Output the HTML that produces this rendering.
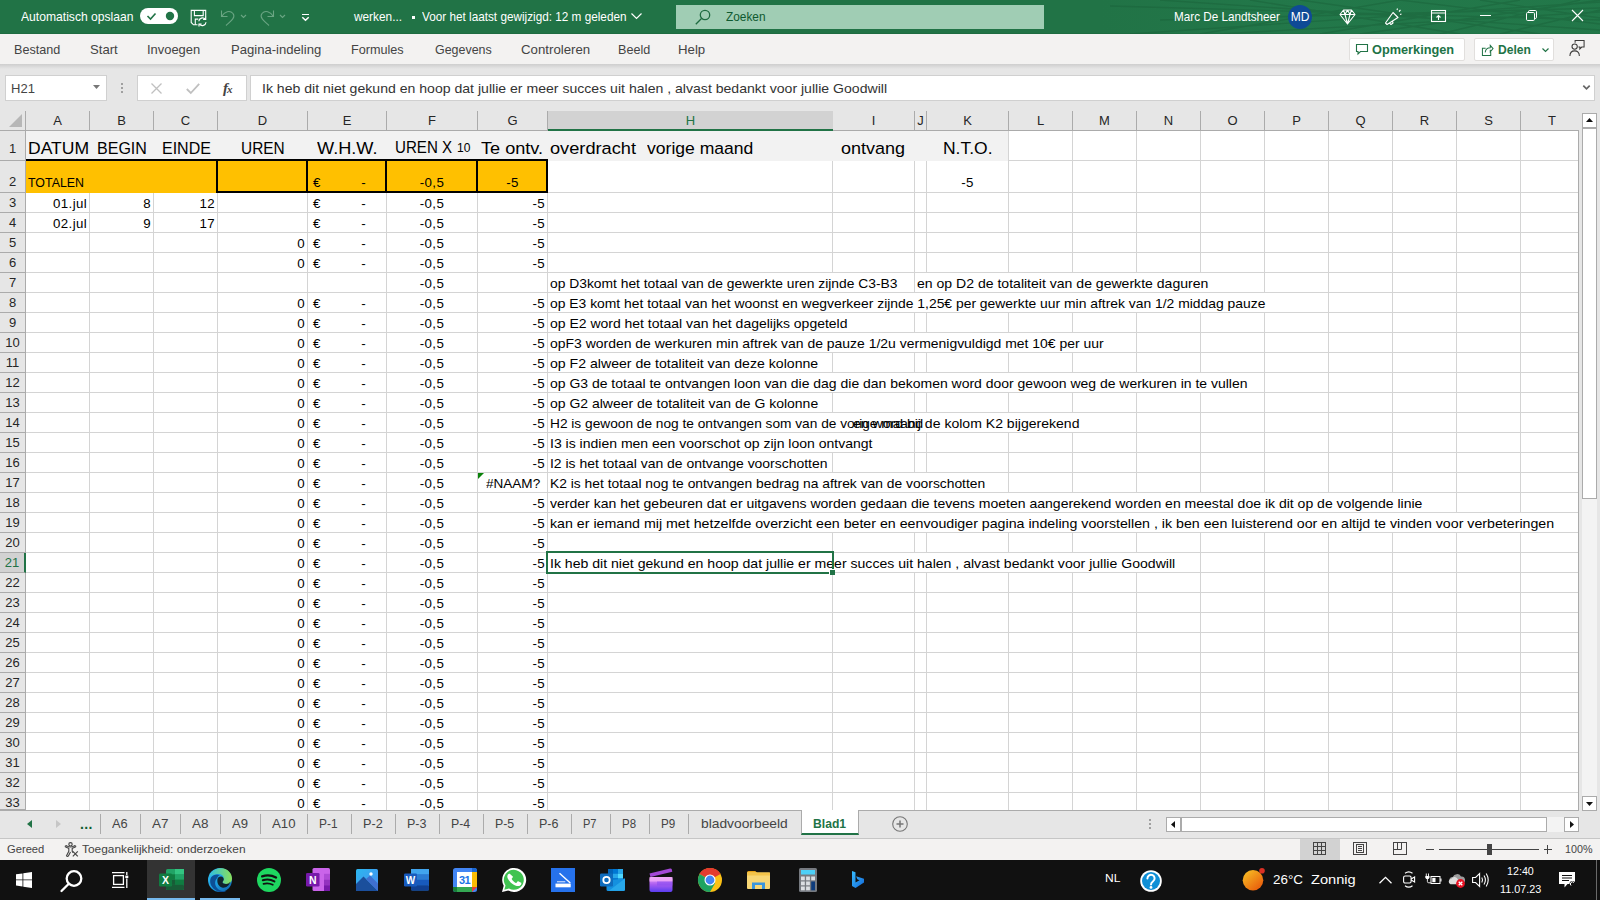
<!DOCTYPE html>
<html lang="nl"><head><meta charset="utf-8"><title>werken - Excel</title>
<style>
*{box-sizing:border-box;margin:0;padding:0}
html,body{width:1600px;height:900px;overflow:hidden;background:#e6e6e6;font-family:"Liberation Sans",sans-serif;color:#000}
.abs,#grid div,#chrome div,#chrome span{position:absolute}
#grid{position:absolute;left:0;top:0;width:1600px;height:810px;overflow:hidden}
#gridbg{position:absolute;left:26px;top:131px;width:1552px;height:679px;background:#fff}
.vl{top:131px;width:1px;height:679px;background:#d4d4d4}
.hl{left:26px;width:1552px;height:1px;background:#d4d4d4}
.c{white-space:nowrap;font-size:13.3px;letter-spacing:0.35px;color:#000}
.c.f{letter-spacing:0}
.ctr{transform:translateX(-50%)}
.ov{background:#fff}
.f{transform-origin:0 50%}
.h1{line-height:35px !important}
.h1 .sm{font-size:13px;position:static !important}
.r2{line-height:43px !important}
.tri{width:0;height:0;border-top:6px solid #0b820b;border-right:6px solid transparent}
.sel{border:2px solid #217346}
.selh{width:6px;height:6px;background:#217346;border-left:1px solid #fff;border-top:1px solid #fff}
#chrome{position:absolute;left:0;top:0;width:1600px;height:900px;pointer-events:none}
#chrome svg{position:absolute;overflow:visible}
.t{white-space:nowrap}
#titlebar{left:0;top:0;width:1600px;height:34px;background:#217346;border-bottom:1px solid #1e6c41}
#titlebar .t{color:#fff;font-size:12.2px;line-height:35px;top:0}
#tabs{left:0;top:34px;width:1600px;height:30px;background:#f3f2f1}
#tabs .t{color:#444;line-height:32px;top:0}
#tabshadow{left:0;top:64px;width:1600px;height:5px;background:linear-gradient(#cecece,#e6e6e6)}
.box{background:#fff;border:1px solid #d0d0d0}
.btn{background:#fff;border:1px solid #e1dfdd;border-radius:2px}
#tabs .btn .t{color:#217346;line-height:22px;top:0}
#fbar .t{font-size:14px;color:#222;line-height:26px;top:0}
.colh{top:111px;height:19px;text-align:center;font-size:13px;line-height:19px;color:#262626;border-right:1px solid #ababab}
.colh.selc{background:#d2d2d2;color:#217346;border-bottom:2px solid #217346;height:20px}
.rowh{left:0;width:25px;text-align:center;font-size:13px;color:#262626;border-bottom:1px solid #ababab}
.rowh.selr{background:#d2d2d2;color:#217346;border-right:2px solid #217346;width:26px}
#sheettabs .t{color:#444;line-height:26px;top:811px}
#sheettabs .sep{top:814px;width:1px;height:20px;background:#ababab}
#status{left:0;top:839px;width:1600px;height:21px;background:#f3f2f1}
#status .t{font-size:11.2px;color:#444;line-height:21px;top:0}
#taskbar{left:0;top:860px;width:1600px;height:40px;background:#111}
#taskbar .t{color:#fff}

</style></head><body>
<div id="gridbg"></div>
<div id="grid">
<div class="vl" style="left:89px"></div>
<div class="vl" style="left:153px"></div>
<div class="vl" style="left:217px"></div>
<div class="vl" style="left:307px"></div>
<div class="vl" style="left:386px"></div>
<div class="vl" style="left:477px"></div>
<div class="vl" style="left:547px"></div>
<div class="vl" style="left:832px"></div>
<div class="vl" style="left:914px"></div>
<div class="vl" style="left:926px"></div>
<div class="vl" style="left:1008px"></div>
<div class="vl" style="left:1072px"></div>
<div class="vl" style="left:1136px"></div>
<div class="vl" style="left:1200px"></div>
<div class="vl" style="left:1264px"></div>
<div class="vl" style="left:1328px"></div>
<div class="vl" style="left:1392px"></div>
<div class="vl" style="left:1456px"></div>
<div class="vl" style="left:1520px"></div>
<div class="vl" style="left:1578px"></div>
<div class="hl" style="top:160px"></div>
<div class="hl" style="top:192px"></div>
<div class="hl" style="top:212px"></div>
<div class="hl" style="top:232px"></div>
<div class="hl" style="top:252px"></div>
<div class="hl" style="top:272px"></div>
<div class="hl" style="top:292px"></div>
<div class="hl" style="top:312px"></div>
<div class="hl" style="top:332px"></div>
<div class="hl" style="top:352px"></div>
<div class="hl" style="top:372px"></div>
<div class="hl" style="top:392px"></div>
<div class="hl" style="top:412px"></div>
<div class="hl" style="top:432px"></div>
<div class="hl" style="top:452px"></div>
<div class="hl" style="top:472px"></div>
<div class="hl" style="top:492px"></div>
<div class="hl" style="top:512px"></div>
<div class="hl" style="top:532px"></div>
<div class="hl" style="top:552px"></div>
<div class="hl" style="top:572px"></div>
<div class="hl" style="top:592px"></div>
<div class="hl" style="top:612px"></div>
<div class="hl" style="top:632px"></div>
<div class="hl" style="top:652px"></div>
<div class="hl" style="top:672px"></div>
<div class="hl" style="top:692px"></div>
<div class="hl" style="top:712px"></div>
<div class="hl" style="top:732px"></div>
<div class="hl" style="top:752px"></div>
<div class="hl" style="top:772px"></div>
<div class="hl" style="top:792px"></div>
<div class="fill" style="left:26px;top:131px;width:982px;height:30px;background:#f2f2f2"></div>
<div class="fill" style="left:26px;top:161px;width:521px;height:32px;background:#ffc000"></div>
<div class="fill" style="left:26px;top:159px;width:522px;height:2px;background:#000"></div>
<div class="fill" style="left:217px;top:191px;width:331px;height:2px;background:#000"></div>
<div class="fill" style="left:216px;top:159px;width:2px;height:34px;background:#000"></div>
<div class="fill" style="left:306px;top:159px;width:2px;height:34px;background:#000"></div>
<div class="fill" style="left:385px;top:159px;width:2px;height:34px;background:#000"></div>
<div class="fill" style="left:476px;top:159px;width:2px;height:34px;background:#000"></div>
<div class="fill" style="left:546px;top:159px;width:2px;height:34px;background:#000"></div>
<div class="c f h1" style="left:27.5px;top:131px;height:29px;line-height:31px;font-size:16.8px;transform:scaleX(1.0458);">DATUM</div>
<div class="c f h1" style="left:96.5px;top:131px;height:29px;line-height:31px;font-size:16.8px;transform:scaleX(0.9553);">BEGIN</div>
<div class="c f h1" style="left:161.8px;top:131px;height:29px;line-height:31px;font-size:16.8px;transform:scaleX(0.9533);">EINDE</div>
<div class="c f h1" style="left:240.6px;top:131px;height:29px;line-height:31px;font-size:16.8px;transform:scaleX(0.9188);">UREN</div>
<div class="c f h1" style="left:317.1px;top:131px;height:29px;line-height:31px;font-size:16.8px;transform:scaleX(1.0816);">W.H.W.</div>
<div class="c f h1" style="left:481.4px;top:131px;height:29px;line-height:31px;font-size:16.8px;transform:scaleX(1.0794);">Te ontv.</div>
<div class="c f h1" style="left:550.4px;top:131px;height:29px;line-height:31px;font-size:16.8px;transform:scaleX(1.0845);">overdracht</div>
<div class="c f h1" style="left:647px;top:131px;height:29px;line-height:31px;font-size:16.8px;transform:scaleX(1.0463);">vorige maand</div>
<div class="c f h1" style="left:841.4px;top:131px;height:29px;line-height:31px;font-size:16.8px;transform:scaleX(1.0734);">ontvang</div>
<div class="c f h1" style="left:942.5px;top:131px;height:29px;line-height:31px;font-size:16.8px;transform:scaleX(1.0407);">N.T.O.</div>
<div class="c f h1" style="left:394.8px;top:131px;height:29px;line-height:31px;font-size:16.8px;transform:scaleX(0.9005);margin-top:-1px">UREN X</div>
<div class="c f h1" style="left:456.7px;top:131px;height:29px;line-height:31px;font-size:12.5px;transform:scaleX(0.9636);">10</div>
<div class="c f r2" style="left:27.5px;top:161px;height:31px;line-height:33px;font-size:13.3px;transform:scaleX(0.9316);">TOTALEN</div>
<div class="c r2" style="left:310px;top:161px;height:31px;line-height:33px;margin-left:3px">€</div>
<div class="c r2" style="right:1216px;top:161px;height:31px;line-height:33px;margin-right:18px">-</div>
<div class="c ctr r2" style="left:432.0px;top:161px;height:31px;line-height:33px;">-0,5</div>
<div class="c ctr r2" style="left:512.5px;top:161px;height:31px;line-height:33px;">-5</div>
<div class="c ctr r2" style="left:967.5px;top:161px;height:31px;line-height:33px;">-5</div>
<div class="c " style="right:1513px;top:193px;height:19px;line-height:21px;">01.jul</div>
<div class="c " style="right:1449px;top:193px;height:19px;line-height:21px;">8</div>
<div class="c " style="right:1385px;top:193px;height:19px;line-height:21px;">12</div>
<div class="c " style="right:1513px;top:213px;height:19px;line-height:21px;">02.jul</div>
<div class="c " style="right:1449px;top:213px;height:19px;line-height:21px;">9</div>
<div class="c " style="right:1385px;top:213px;height:19px;line-height:21px;">17</div>
<div class="c " style="left:310px;top:193px;height:19px;line-height:21px;margin-left:3px">€</div>
<div class="c " style="right:1216px;top:193px;height:19px;line-height:21px;margin-right:18px">-</div>
<div class="c ctr " style="left:432.0px;top:193px;height:19px;line-height:21px;">-0,5</div>
<div class="c " style="right:1055px;top:193px;height:19px;line-height:21px;">-5</div>
<div class="c " style="left:310px;top:213px;height:19px;line-height:21px;margin-left:3px">€</div>
<div class="c " style="right:1216px;top:213px;height:19px;line-height:21px;margin-right:18px">-</div>
<div class="c ctr " style="left:432.0px;top:213px;height:19px;line-height:21px;">-0,5</div>
<div class="c " style="right:1055px;top:213px;height:19px;line-height:21px;">-5</div>
<div class="c " style="right:1295px;top:233px;height:19px;line-height:21px;">0</div>
<div class="c " style="left:310px;top:233px;height:19px;line-height:21px;margin-left:3px">€</div>
<div class="c " style="right:1216px;top:233px;height:19px;line-height:21px;margin-right:18px">-</div>
<div class="c ctr " style="left:432.0px;top:233px;height:19px;line-height:21px;">-0,5</div>
<div class="c " style="right:1055px;top:233px;height:19px;line-height:21px;">-5</div>
<div class="c " style="right:1295px;top:253px;height:19px;line-height:21px;">0</div>
<div class="c " style="left:310px;top:253px;height:19px;line-height:21px;margin-left:3px">€</div>
<div class="c " style="right:1216px;top:253px;height:19px;line-height:21px;margin-right:18px">-</div>
<div class="c ctr " style="left:432.0px;top:253px;height:19px;line-height:21px;">-0,5</div>
<div class="c " style="right:1055px;top:253px;height:19px;line-height:21px;">-5</div>
<div class="c ctr " style="left:432.0px;top:273px;height:19px;line-height:21px;">-0,5</div>
<div class="c " style="right:1295px;top:293px;height:19px;line-height:21px;">0</div>
<div class="c " style="left:310px;top:293px;height:19px;line-height:21px;margin-left:3px">€</div>
<div class="c " style="right:1216px;top:293px;height:19px;line-height:21px;margin-right:18px">-</div>
<div class="c ctr " style="left:432.0px;top:293px;height:19px;line-height:21px;">-0,5</div>
<div class="c " style="right:1055px;top:293px;height:19px;line-height:21px;">-5</div>
<div class="c " style="right:1295px;top:313px;height:19px;line-height:21px;">0</div>
<div class="c " style="left:310px;top:313px;height:19px;line-height:21px;margin-left:3px">€</div>
<div class="c " style="right:1216px;top:313px;height:19px;line-height:21px;margin-right:18px">-</div>
<div class="c ctr " style="left:432.0px;top:313px;height:19px;line-height:21px;">-0,5</div>
<div class="c " style="right:1055px;top:313px;height:19px;line-height:21px;">-5</div>
<div class="c " style="right:1295px;top:333px;height:19px;line-height:21px;">0</div>
<div class="c " style="left:310px;top:333px;height:19px;line-height:21px;margin-left:3px">€</div>
<div class="c " style="right:1216px;top:333px;height:19px;line-height:21px;margin-right:18px">-</div>
<div class="c ctr " style="left:432.0px;top:333px;height:19px;line-height:21px;">-0,5</div>
<div class="c " style="right:1055px;top:333px;height:19px;line-height:21px;">-5</div>
<div class="c " style="right:1295px;top:353px;height:19px;line-height:21px;">0</div>
<div class="c " style="left:310px;top:353px;height:19px;line-height:21px;margin-left:3px">€</div>
<div class="c " style="right:1216px;top:353px;height:19px;line-height:21px;margin-right:18px">-</div>
<div class="c ctr " style="left:432.0px;top:353px;height:19px;line-height:21px;">-0,5</div>
<div class="c " style="right:1055px;top:353px;height:19px;line-height:21px;">-5</div>
<div class="c " style="right:1295px;top:373px;height:19px;line-height:21px;">0</div>
<div class="c " style="left:310px;top:373px;height:19px;line-height:21px;margin-left:3px">€</div>
<div class="c " style="right:1216px;top:373px;height:19px;line-height:21px;margin-right:18px">-</div>
<div class="c ctr " style="left:432.0px;top:373px;height:19px;line-height:21px;">-0,5</div>
<div class="c " style="right:1055px;top:373px;height:19px;line-height:21px;">-5</div>
<div class="c " style="right:1295px;top:393px;height:19px;line-height:21px;">0</div>
<div class="c " style="left:310px;top:393px;height:19px;line-height:21px;margin-left:3px">€</div>
<div class="c " style="right:1216px;top:393px;height:19px;line-height:21px;margin-right:18px">-</div>
<div class="c ctr " style="left:432.0px;top:393px;height:19px;line-height:21px;">-0,5</div>
<div class="c " style="right:1055px;top:393px;height:19px;line-height:21px;">-5</div>
<div class="c " style="right:1295px;top:413px;height:19px;line-height:21px;">0</div>
<div class="c " style="left:310px;top:413px;height:19px;line-height:21px;margin-left:3px">€</div>
<div class="c " style="right:1216px;top:413px;height:19px;line-height:21px;margin-right:18px">-</div>
<div class="c ctr " style="left:432.0px;top:413px;height:19px;line-height:21px;">-0,5</div>
<div class="c " style="right:1055px;top:413px;height:19px;line-height:21px;">-5</div>
<div class="c " style="right:1295px;top:433px;height:19px;line-height:21px;">0</div>
<div class="c " style="left:310px;top:433px;height:19px;line-height:21px;margin-left:3px">€</div>
<div class="c " style="right:1216px;top:433px;height:19px;line-height:21px;margin-right:18px">-</div>
<div class="c ctr " style="left:432.0px;top:433px;height:19px;line-height:21px;">-0,5</div>
<div class="c " style="right:1055px;top:433px;height:19px;line-height:21px;">-5</div>
<div class="c " style="right:1295px;top:453px;height:19px;line-height:21px;">0</div>
<div class="c " style="left:310px;top:453px;height:19px;line-height:21px;margin-left:3px">€</div>
<div class="c " style="right:1216px;top:453px;height:19px;line-height:21px;margin-right:18px">-</div>
<div class="c ctr " style="left:432.0px;top:453px;height:19px;line-height:21px;">-0,5</div>
<div class="c " style="right:1055px;top:453px;height:19px;line-height:21px;">-5</div>
<div class="c " style="right:1295px;top:473px;height:19px;line-height:21px;">0</div>
<div class="c " style="left:310px;top:473px;height:19px;line-height:21px;margin-left:3px">€</div>
<div class="c " style="right:1216px;top:473px;height:19px;line-height:21px;margin-right:18px">-</div>
<div class="c ctr " style="left:432.0px;top:473px;height:19px;line-height:21px;">-0,5</div>
<div class="c f " style="left:485.8px;top:473px;height:19px;line-height:21px;font-size:13.3px;transform:scaleX(1.0184);">#NAAM?</div>
<div class="c " style="right:1295px;top:493px;height:19px;line-height:21px;">0</div>
<div class="c " style="left:310px;top:493px;height:19px;line-height:21px;margin-left:3px">€</div>
<div class="c " style="right:1216px;top:493px;height:19px;line-height:21px;margin-right:18px">-</div>
<div class="c ctr " style="left:432.0px;top:493px;height:19px;line-height:21px;">-0,5</div>
<div class="c " style="right:1055px;top:493px;height:19px;line-height:21px;">-5</div>
<div class="c " style="right:1295px;top:513px;height:19px;line-height:21px;">0</div>
<div class="c " style="left:310px;top:513px;height:19px;line-height:21px;margin-left:3px">€</div>
<div class="c " style="right:1216px;top:513px;height:19px;line-height:21px;margin-right:18px">-</div>
<div class="c ctr " style="left:432.0px;top:513px;height:19px;line-height:21px;">-0,5</div>
<div class="c " style="right:1055px;top:513px;height:19px;line-height:21px;">-5</div>
<div class="c " style="right:1295px;top:533px;height:19px;line-height:21px;">0</div>
<div class="c " style="left:310px;top:533px;height:19px;line-height:21px;margin-left:3px">€</div>
<div class="c " style="right:1216px;top:533px;height:19px;line-height:21px;margin-right:18px">-</div>
<div class="c ctr " style="left:432.0px;top:533px;height:19px;line-height:21px;">-0,5</div>
<div class="c " style="right:1055px;top:533px;height:19px;line-height:21px;">-5</div>
<div class="c " style="right:1295px;top:553px;height:19px;line-height:21px;">0</div>
<div class="c " style="left:310px;top:553px;height:19px;line-height:21px;margin-left:3px">€</div>
<div class="c " style="right:1216px;top:553px;height:19px;line-height:21px;margin-right:18px">-</div>
<div class="c ctr " style="left:432.0px;top:553px;height:19px;line-height:21px;">-0,5</div>
<div class="c " style="right:1055px;top:553px;height:19px;line-height:21px;">-5</div>
<div class="c " style="right:1295px;top:573px;height:19px;line-height:21px;">0</div>
<div class="c " style="left:310px;top:573px;height:19px;line-height:21px;margin-left:3px">€</div>
<div class="c " style="right:1216px;top:573px;height:19px;line-height:21px;margin-right:18px">-</div>
<div class="c ctr " style="left:432.0px;top:573px;height:19px;line-height:21px;">-0,5</div>
<div class="c " style="right:1055px;top:573px;height:19px;line-height:21px;">-5</div>
<div class="c " style="right:1295px;top:593px;height:19px;line-height:21px;">0</div>
<div class="c " style="left:310px;top:593px;height:19px;line-height:21px;margin-left:3px">€</div>
<div class="c " style="right:1216px;top:593px;height:19px;line-height:21px;margin-right:18px">-</div>
<div class="c ctr " style="left:432.0px;top:593px;height:19px;line-height:21px;">-0,5</div>
<div class="c " style="right:1055px;top:593px;height:19px;line-height:21px;">-5</div>
<div class="c " style="right:1295px;top:613px;height:19px;line-height:21px;">0</div>
<div class="c " style="left:310px;top:613px;height:19px;line-height:21px;margin-left:3px">€</div>
<div class="c " style="right:1216px;top:613px;height:19px;line-height:21px;margin-right:18px">-</div>
<div class="c ctr " style="left:432.0px;top:613px;height:19px;line-height:21px;">-0,5</div>
<div class="c " style="right:1055px;top:613px;height:19px;line-height:21px;">-5</div>
<div class="c " style="right:1295px;top:633px;height:19px;line-height:21px;">0</div>
<div class="c " style="left:310px;top:633px;height:19px;line-height:21px;margin-left:3px">€</div>
<div class="c " style="right:1216px;top:633px;height:19px;line-height:21px;margin-right:18px">-</div>
<div class="c ctr " style="left:432.0px;top:633px;height:19px;line-height:21px;">-0,5</div>
<div class="c " style="right:1055px;top:633px;height:19px;line-height:21px;">-5</div>
<div class="c " style="right:1295px;top:653px;height:19px;line-height:21px;">0</div>
<div class="c " style="left:310px;top:653px;height:19px;line-height:21px;margin-left:3px">€</div>
<div class="c " style="right:1216px;top:653px;height:19px;line-height:21px;margin-right:18px">-</div>
<div class="c ctr " style="left:432.0px;top:653px;height:19px;line-height:21px;">-0,5</div>
<div class="c " style="right:1055px;top:653px;height:19px;line-height:21px;">-5</div>
<div class="c " style="right:1295px;top:673px;height:19px;line-height:21px;">0</div>
<div class="c " style="left:310px;top:673px;height:19px;line-height:21px;margin-left:3px">€</div>
<div class="c " style="right:1216px;top:673px;height:19px;line-height:21px;margin-right:18px">-</div>
<div class="c ctr " style="left:432.0px;top:673px;height:19px;line-height:21px;">-0,5</div>
<div class="c " style="right:1055px;top:673px;height:19px;line-height:21px;">-5</div>
<div class="c " style="right:1295px;top:693px;height:19px;line-height:21px;">0</div>
<div class="c " style="left:310px;top:693px;height:19px;line-height:21px;margin-left:3px">€</div>
<div class="c " style="right:1216px;top:693px;height:19px;line-height:21px;margin-right:18px">-</div>
<div class="c ctr " style="left:432.0px;top:693px;height:19px;line-height:21px;">-0,5</div>
<div class="c " style="right:1055px;top:693px;height:19px;line-height:21px;">-5</div>
<div class="c " style="right:1295px;top:713px;height:19px;line-height:21px;">0</div>
<div class="c " style="left:310px;top:713px;height:19px;line-height:21px;margin-left:3px">€</div>
<div class="c " style="right:1216px;top:713px;height:19px;line-height:21px;margin-right:18px">-</div>
<div class="c ctr " style="left:432.0px;top:713px;height:19px;line-height:21px;">-0,5</div>
<div class="c " style="right:1055px;top:713px;height:19px;line-height:21px;">-5</div>
<div class="c " style="right:1295px;top:733px;height:19px;line-height:21px;">0</div>
<div class="c " style="left:310px;top:733px;height:19px;line-height:21px;margin-left:3px">€</div>
<div class="c " style="right:1216px;top:733px;height:19px;line-height:21px;margin-right:18px">-</div>
<div class="c ctr " style="left:432.0px;top:733px;height:19px;line-height:21px;">-0,5</div>
<div class="c " style="right:1055px;top:733px;height:19px;line-height:21px;">-5</div>
<div class="c " style="right:1295px;top:753px;height:19px;line-height:21px;">0</div>
<div class="c " style="left:310px;top:753px;height:19px;line-height:21px;margin-left:3px">€</div>
<div class="c " style="right:1216px;top:753px;height:19px;line-height:21px;margin-right:18px">-</div>
<div class="c ctr " style="left:432.0px;top:753px;height:19px;line-height:21px;">-0,5</div>
<div class="c " style="right:1055px;top:753px;height:19px;line-height:21px;">-5</div>
<div class="c " style="right:1295px;top:773px;height:19px;line-height:21px;">0</div>
<div class="c " style="left:310px;top:773px;height:19px;line-height:21px;margin-left:3px">€</div>
<div class="c " style="right:1216px;top:773px;height:19px;line-height:21px;margin-right:18px">-</div>
<div class="c ctr " style="left:432.0px;top:773px;height:19px;line-height:21px;">-0,5</div>
<div class="c " style="right:1055px;top:773px;height:19px;line-height:21px;">-5</div>
<div class="c " style="right:1295px;top:793px;height:19px;line-height:21px;">0</div>
<div class="c " style="left:310px;top:793px;height:19px;line-height:21px;margin-left:3px">€</div>
<div class="c " style="right:1216px;top:793px;height:19px;line-height:21px;margin-right:18px">-</div>
<div class="c ctr " style="left:432.0px;top:793px;height:19px;line-height:21px;">-0,5</div>
<div class="c " style="right:1055px;top:793px;height:19px;line-height:21px;">-5</div>
<div class="fill" style="left:914px;top:413px;width:222px;height:19px;background:#fff"></div>
<div class="c f ov" style="left:550px;top:273px;height:19px;line-height:21px;font-size:13.3px;transform:scaleX(1.0400);">op D3komt het totaal van de gewerkte uren zijnde C3-B3</div>
<div class="c f ov" style="left:550px;top:293px;height:19px;line-height:21px;font-size:13.3px;transform:scaleX(1.0441);">op E3 komt het totaal van het woonst en wegverkeer zijnde 1,25€ per gewerkte uur min aftrek van 1/2 middag pauze</div>
<div class="c f ov" style="left:550px;top:313px;height:19px;line-height:21px;font-size:13.3px;transform:scaleX(1.0506);">op E2 word het totaal van het dagelijks opgeteld</div>
<div class="c f ov" style="left:550px;top:333px;height:19px;line-height:21px;font-size:13.3px;transform:scaleX(1.0492);">opF3 worden de werkuren min aftrek van de pauze 1/2u vermenigvuldigd met 10€ per uur</div>
<div class="c f ov" style="left:550px;top:353px;height:19px;line-height:21px;font-size:13.3px;transform:scaleX(1.0609);">op F2 alweer de totaliteit van deze kolonne</div>
<div class="c f ov" style="left:550px;top:373px;height:19px;line-height:21px;font-size:13.3px;transform:scaleX(1.0507);">op G3 de totaal te ontvangen loon van die dag die dan bekomen word door gewoon weg de werkuren in te vullen</div>
<div class="c f ov" style="left:550px;top:393px;height:19px;line-height:21px;font-size:13.3px;transform:scaleX(1.0516);">op G2 alweer de totaliteit van de G kolonne</div>
<div class="c f ov" style="left:550px;top:413px;height:19px;line-height:21px;font-size:13.3px;transform:scaleX(1.0303);">H2 is gewoon de nog te ontvangen som van de vorige maand</div>
<div class="c f ov" style="left:550px;top:433px;height:19px;line-height:21px;font-size:13.3px;transform:scaleX(1.0537);">I3 is indien men een voorschot op zijn loon ontvangt</div>
<div class="c f ov" style="left:550px;top:453px;height:19px;line-height:21px;font-size:13.3px;transform:scaleX(1.0484);">I2 is het totaal van de ontvange voorschotten</div>
<div class="c f ov" style="left:550px;top:473px;height:19px;line-height:21px;font-size:13.3px;transform:scaleX(1.0401);">K2 is het totaal nog te ontvangen bedrag na aftrek van de voorschotten</div>
<div class="c f ov" style="left:550px;top:493px;height:19px;line-height:21px;font-size:13.3px;transform:scaleX(1.0546);">verder kan het gebeuren dat er uitgavens worden gedaan die tevens moeten aangerekend worden en meestal doe ik dit op de volgende linie</div>
<div class="c f ov" style="left:550px;top:513px;height:19px;line-height:21px;font-size:13.3px;transform:scaleX(1.0680);">kan er iemand mij met hetzelfde overzicht een beter en eenvoudiger pagina indeling voorstellen , ik ben een luisterend oor en altijd te vinden voor verbeteringen</div>
<div class="c f ov" style="left:550px;top:553px;height:19px;line-height:21px;font-size:13.3px;transform:scaleX(1.0586);">Ik heb dit niet gekund en hoop dat jullie er meer succes uit halen , alvast bedankt voor jullie Goodwill</div>
<div class="c f ov" style="left:917px;top:273px;height:19px;line-height:21px;font-size:13.3px;transform:scaleX(1.0565);">en op D2 de totaliteit van de gewerkte daguren</div>
<div class="c f " style="left:853.3px;top:413px;height:19px;line-height:21px;font-size:13.3px;transform:scaleX(1.0566);">en word bij de kolom K2 bijgerekend</div>
<div class="tri" style="left:478px;top:473px"></div>
<div class="sel" style="left:546px;top:551px;width:288px;height:23px"></div>
<div class="selh" style="left:829px;top:569px"></div>
</div>
<div id="chrome">
<div id="titlebar">
<svg width="500" height="34" style="left:1100px;top:0" viewBox="0 0 500 34"><defs><linearGradient id="tg" x1="0" y1="0" x2="1" y2="0"><stop offset="0" stop-color="#258050" stop-opacity="0"/><stop offset=".4" stop-color="#258050" stop-opacity=".35"/><stop offset="1" stop-color="#258050" stop-opacity=".35"/></linearGradient></defs><rect width="500" height="34" fill="url(#tg)"/><g fill="none" stroke="#1a6239" stroke-width="1.300" opacity=".5"><path d="M30 34L500 2M60 0L500 30M120 34L500 12M10 6L500 20M200 0L440 34M260 34L500 0M300 0L500 24M150 0L360 34M340 34L480 0M380 0L500 18M220 34L420 0M60 20L500 8M400 34L500 10M100 34L300 0"/></g></svg>
<span class="t f" style="left:20.5px;font-size:12.2px;transform:scaleX(0.9943);">Automatisch opslaan</span>
<div style="left:140px;top:8px;width:38px;height:16px;border-radius:8px;background:#fff"></div>
<svg style="left:140px;top:8px" width="38" height="16" viewBox="0 0 38 16"><path d="M7.5 8l3 3 5-5.5" fill="none" stroke="#217346" stroke-width="1.6"/><circle cx="30" cy="8" r="4.2" fill="#217346"/></svg>
<svg style="left:190px;top:9px" width="18" height="18" viewBox="0 0 18 18" fill="none" stroke="#fff" stroke-width="1.100"><path d="M7.500 15.800H3.500l-2.300-2.300V1.400h14.500v6.500"/><path d="M4.400 1.400v5.200h8.800V1.400"/><path d="M5.300 15.800v-5.700h3"/><g stroke-width="1.200"><path d="M8.800 12.200a3.700 3.700 0 0 1 6.500-2M16 13.200a3.700 3.700 0 0 1-6.500 2"/><path d="M15.700 7.800v2.600h-2.600M9 17.600v-2.600h2.600"/></g></svg>
<svg style="left:220px;top:9px" width="70" height="18" viewBox="0 0 70 18" fill="none" stroke="#6aa583" stroke-width="1.1"><path d="M1.5 1.5v6h6M1.8 7.3C4.5 2.5 10 1 13 4.5c3 3.800-2 7.500-7 12"/><path d="M21 6l2.500 2.500 2.500-2.500"/><path d="M53.500 1.500v6h-6M53.200 7.300C50.500 2.500 45 1 42 4.500c-3 3.800 2 7.500 7 12"/><path d="M60 6l2.500 2.500 2.500-2.500"/></svg>
<svg style="left:301px;top:13px" width="9" height="9" viewBox="0 0 9 9" fill="none" stroke="#fff" stroke-width="1"><path d="M1 1.500h7"/><path d="M1.300 4.300l3.200 3 3.200-3" stroke-width="1.500"/></svg>
<span class="t f" style="left:353.5px;font-size:12.2px;transform:scaleX(0.9706);">werken...</span>
<div style="left:412px;top:16px;width:3px;height:3px;background:#fff"></div>
<span class="t f" style="left:422px;font-size:12.2px;transform:scaleX(0.9643);">Voor het laatst gewijzigd: 12 m geleden</span>
<svg style="left:631px;top:13px" width="11" height="7" viewBox="0 0 11 7" fill="none" stroke="#fff" stroke-width="1.2"><path d="M0.500 0.500l5 5 5-5"/></svg>
<div style="left:676px;top:5px;width:368px;height:24px;background:#a0cdb4"></div>
<svg style="left:695px;top:9px" width="16" height="16" viewBox="0 0 16 16" fill="none" stroke="#1e6b40" stroke-width="1.3"><circle cx="10" cy="6" r="4.700"/><path d="M6.500 9.500L0.800 15.200"/></svg>
<span class="t f" style="left:725.5px;font-size:12.2px;transform:scaleX(0.9716);color:#0f5a30">Zoeken</span>
<span class="t f" style="left:1173.5px;font-size:12.2px;transform:scaleX(0.9600);">Marc De Landtsheer</span>
<div style="left:1288px;top:5px;width:24px;height:24px;border-radius:12px;background:#0f4a96;color:#fff;font-size:12px;line-height:24px;text-align:center">MD</div>
<svg style="left:1339px;top:9px" width="17" height="16" viewBox="0 0 17 16" fill="none" stroke="#fff" stroke-width="1.1" stroke-linejoin="round"><path d="M4.500 1h8l3.500 4.500-7.500 9.500L1 5.500zM1 5.500h15M6 5.500l2.500 9.500 2.500-9.500M4.500 1l1.500 4.500 2.500-4.500 2.500 4.500 1.500-4.500"/></svg>
<svg style="left:1384px;top:8px" width="18" height="18" viewBox="0 0 18 18" fill="none" stroke="#fff" stroke-width="1.1" stroke-linejoin="round"><path d="M9 4.500l5 5L3 16.500 1.500 15zM5.500 15l1.500 1.500 2-1.500-.5-2M13 2l.5-1.500M15 3.500l1.500-1.500M16 6.500l1.500-.5"/></svg>
<svg style="left:1431px;top:10px" width="15" height="12" viewBox="0 0 15 12" fill="none" stroke="#fff" stroke-width="1.1"><rect x=".5" y=".5" width="14" height="11"/><path d="M.5 3h14M7.500 10V5.500M5.500 7.500l2-2 2 2"/></svg>
<div style="left:1480px;top:15px;width:11px;height:1px;background:#fff"></div>
<svg style="left:1526px;top:10px" width="11" height="11" viewBox="0 0 11 11" fill="none" stroke="#fff" stroke-width="1"><rect x=".5" y="2.500" width="8" height="8" rx="1.200"/><path d="M2.500 2.300V1.700Q2.500.5 3.700.5H9.300Q10.500.5 10.500 1.700V7.300Q10.500 8.500 9.300 8.500H8.700"/></svg>
<svg style="left:1572px;top:10px" width="11" height="11" viewBox="0 0 11 11" fill="none" stroke="#fff" stroke-width="1.1"><path d="M0 0l11 11M11 0L0 11"/></svg>
</div>
<div id="tabs">
<span class="t f" style="left:14px;font-size:13px;transform:scaleX(0.9685);">Bestand</span>
<span class="t f" style="left:90px;font-size:13px;transform:scaleX(1.0084);">Start</span>
<span class="t f" style="left:147px;font-size:13px;transform:scaleX(0.9944);">Invoegen</span>
<span class="t f" style="left:231px;font-size:13px;transform:scaleX(1.0064);">Pagina-indeling</span>
<span class="t f" style="left:351px;font-size:13px;transform:scaleX(0.9725);">Formules</span>
<span class="t f" style="left:434.5px;font-size:13px;transform:scaleX(0.9567);">Gegevens</span>
<span class="t f" style="left:520.5px;font-size:13px;transform:scaleX(1.0186);">Controleren</span>
<span class="t f" style="left:618px;font-size:13px;transform:scaleX(0.9684);">Beeld</span>
<span class="t f" style="left:678px;font-size:13px;transform:scaleX(1.0168);">Help</span>
<div class="btn" style="left:1349px;top:4px;width:116px;height:23px"><svg style="left:6px;top:5px" width="12" height="11" viewBox="0 0 12 11" fill="none" stroke="#217346" stroke-width="1.1"><path d="M.5.5h11v7h-7l-2.500 2.500v-2.500h-1.500z"/></svg><span class="t f" style="left:21.8px;font-size:13px;font-weight:bold;transform:scaleX(0.9798);">Opmerkingen</span></div>
<div class="btn" style="left:1474px;top:4px;width:80px;height:23px"><svg style="left:6px;top:5px" width="13" height="12" viewBox="0 0 13 13" fill="none" stroke="#217346" stroke-width="1.1"><path d="M4.500 4.500h-3.500v8h9v-3.500M4 9c.5-3.500 2.500-5 5.500-5V1.500l3 3.500-3 3.500V6.200"/></svg><span class="t f" style="left:22.8px;font-size:13px;font-weight:bold;transform:scaleX(0.9264);">Delen</span><svg style="left:67px;top:9px" width="7" height="5" viewBox="0 0 7 5" fill="none" stroke="#217346" stroke-width="1.2"><path d="M.5.500l3 3 3-3"/></svg></div>
<svg style="left:1568px;top:6px" width="18" height="17" viewBox="0 0 18 18" fill="none" stroke="#3b3a39" stroke-width="1.1"><circle cx="6.500" cy="7" r="2.800"/><path d="M1.500 17c0-4 2-5.500 5-5.500s5 1.500 5 5.500M7 3V.5h9.500v7h-2.500l-2 2v-2h-1.500"/></svg>
</div><div id="tabshadow"></div>
<div id="fbar">
<div class="box" style="left:5px;top:75px;width:102px;height:26px"><span class="t f" style="left:5.3px;font-size:13.3px;transform:scaleX(0.9793);color:#444">H21</span><svg style="left:87px;top:9px" width="7" height="4" viewBox="0 0 7 4"><path d="M0 0h7l-3.500 4z" fill="#777"/></svg></div>
<svg style="left:121px;top:83px" width="2" height="10" viewBox="0 0 2 10" fill="#a0a0a0"><rect width="2" height="2"/><rect y="4" width="2" height="2"/><rect y="8" width="2" height="2"/></svg>
<div class="box" style="left:137px;top:75px;width:110px;height:26px"><svg style="left:13px;top:7px" width="11" height="11" viewBox="0 0 11 11" fill="none" stroke="#c0c0c0" stroke-width="1.300"><path d="M.5.500l10 10M10.500.500l-10 10"/></svg><svg style="left:48px;top:7px" width="14" height="11" viewBox="0 0 14 11" fill="none" stroke="#c0c0c0" stroke-width="1.800"><path d="M.8 6l4 4L13.200.800"/></svg><span class="t" style="left:85px;font-family:'Liberation Serif',serif;font-style:italic;font-size:15px;color:#444;font-weight:bold;letter-spacing:-1px;margin-top:-1px">f<span style="position:static;font-size:11px">x</span></span></div>
<div class="box" style="left:250px;top:75px;width:1345px;height:26px"><span class="t f" style="left:10.5px;font-size:13.3px;transform:scaleX(1.0583);color:#333">Ik heb dit niet gekund en hoop dat jullie er meer succes uit halen , alvast bedankt voor jullie Goodwill</span><svg style="left:1332px;top:9px" width="7" height="5" viewBox="0 0 7 5" fill="none" stroke="#666" stroke-width="1.700"><path d="M.3.600l3.200 3.200 3.200-3.200"/></svg></div>
</div>
<div id="heads">
<div style="left:0;top:130px;width:1579px;height:1px;background:#ababab"></div>
<div style="left:25px;top:111px;width:1px;height:699px;background:#ababab"></div>
<div style="left:1578px;top:130px;width:1px;height:680px;background:#ababab"></div>
<div style="left:0;top:810px;width:1579px;height:1px;background:#ababab"></div>
<svg style="left:9px;top:114px" width="13" height="13" viewBox="0 0 13 13"><path d="M13 0v13H0z" fill="#b7b7b7"/></svg>
<div class="colh" style="left:26px;width:64px">A</div>
<div class="colh" style="left:90px;width:64px">B</div>
<div class="colh" style="left:154px;width:64px">C</div>
<div class="colh" style="left:218px;width:90px">D</div>
<div class="colh" style="left:308px;width:79px">E</div>
<div class="colh" style="left:387px;width:91px">F</div>
<div class="colh" style="left:478px;width:70px">G</div>
<div class="colh selc" style="left:548px;width:285px;border-right:none">H</div>
<div class="colh" style="left:833px;width:82px">I</div>
<div class="colh" style="left:915px;width:12px">J</div>
<div class="colh" style="left:927px;width:82px">K</div>
<div class="colh" style="left:1009px;width:64px">L</div>
<div class="colh" style="left:1073px;width:64px">M</div>
<div class="colh" style="left:1137px;width:64px">N</div>
<div class="colh" style="left:1201px;width:64px">O</div>
<div class="colh" style="left:1265px;width:64px">P</div>
<div class="colh" style="left:1329px;width:64px">Q</div>
<div class="colh" style="left:1393px;width:64px">R</div>
<div class="colh" style="left:1457px;width:64px">S</div>
<div class="colh" style="left:1521px;width:62px;border-right:none">T</div>
<div class="rowh" style="top:131px;height:30px;line-height:36px;overflow:hidden">1</div>
<div class="rowh" style="top:161px;height:32px;line-height:42px;overflow:hidden">2</div>
<div class="rowh" style="top:193px;height:20px;line-height:19px;overflow:hidden">3</div>
<div class="rowh" style="top:213px;height:20px;line-height:19px;overflow:hidden">4</div>
<div class="rowh" style="top:233px;height:20px;line-height:19px;overflow:hidden">5</div>
<div class="rowh" style="top:253px;height:20px;line-height:19px;overflow:hidden">6</div>
<div class="rowh" style="top:273px;height:20px;line-height:19px;overflow:hidden">7</div>
<div class="rowh" style="top:293px;height:20px;line-height:19px;overflow:hidden">8</div>
<div class="rowh" style="top:313px;height:20px;line-height:19px;overflow:hidden">9</div>
<div class="rowh" style="top:333px;height:20px;line-height:19px;overflow:hidden">10</div>
<div class="rowh" style="top:353px;height:20px;line-height:19px;overflow:hidden">11</div>
<div class="rowh" style="top:373px;height:20px;line-height:19px;overflow:hidden">12</div>
<div class="rowh" style="top:393px;height:20px;line-height:19px;overflow:hidden">13</div>
<div class="rowh" style="top:413px;height:20px;line-height:19px;overflow:hidden">14</div>
<div class="rowh" style="top:433px;height:20px;line-height:19px;overflow:hidden">15</div>
<div class="rowh" style="top:453px;height:20px;line-height:19px;overflow:hidden">16</div>
<div class="rowh" style="top:473px;height:20px;line-height:19px;overflow:hidden">17</div>
<div class="rowh" style="top:493px;height:20px;line-height:19px;overflow:hidden">18</div>
<div class="rowh" style="top:513px;height:20px;line-height:19px;overflow:hidden">19</div>
<div class="rowh" style="top:533px;height:20px;line-height:19px;overflow:hidden">20</div>
<div class="rowh selr" style="top:553px;height:20px;line-height:19px;overflow:hidden">21</div>
<div class="rowh" style="top:573px;height:20px;line-height:19px;overflow:hidden">22</div>
<div class="rowh" style="top:593px;height:20px;line-height:19px;overflow:hidden">23</div>
<div class="rowh" style="top:613px;height:20px;line-height:19px;overflow:hidden">24</div>
<div class="rowh" style="top:633px;height:20px;line-height:19px;overflow:hidden">25</div>
<div class="rowh" style="top:653px;height:20px;line-height:19px;overflow:hidden">26</div>
<div class="rowh" style="top:673px;height:20px;line-height:19px;overflow:hidden">27</div>
<div class="rowh" style="top:693px;height:20px;line-height:19px;overflow:hidden">28</div>
<div class="rowh" style="top:713px;height:20px;line-height:19px;overflow:hidden">29</div>
<div class="rowh" style="top:733px;height:20px;line-height:19px;overflow:hidden">30</div>
<div class="rowh" style="top:753px;height:20px;line-height:19px;overflow:hidden">31</div>
<div class="rowh" style="top:773px;height:20px;line-height:19px;overflow:hidden">32</div>
<div class="rowh" style="top:793px;height:17px;line-height:19px;overflow:hidden">33</div>
</div>
<div id="vscroll">
<div style="left:1582px;top:128px;width:15px;height:668px;background:#f3f3f3"></div>
<div class="box" style="left:1582px;top:113px;width:15px;height:15px;border-color:#ababab"><svg style="left:3px;top:4px" width="7" height="4" viewBox="0 0 7 4"><path d="M0 4h7L3.500 0z" fill="#111"/></svg></div>
<div class="box" style="left:1582px;top:128px;width:15px;height:371px;border-color:#ababab"></div>
<div class="box" style="left:1582px;top:796px;width:15px;height:15px;border-color:#ababab"><svg style="left:3px;top:5px" width="7" height="4" viewBox="0 0 7 4"><path d="M0 0h7L3.500 4z" fill="#111"/></svg></div>
</div>
<div id="sheettabs">
<svg style="left:27px;top:820px" width="5" height="8" viewBox="0 0 5 8"><path d="M5 0v8L0 4z" fill="#217346"/></svg>
<svg style="left:56px;top:820px" width="5" height="8" viewBox="0 0 5 8"><path d="M0 0v8l5-4z" fill="#c6c6c6"/></svg>
<span class="t" style="left:80px;color:#0e5c2f;font-weight:bold;font-size:14px;letter-spacing:0.3px">...</span>
<div class="sep" style="left:100px"></div>
<div class="sep" style="left:140px"></div>
<div class="sep" style="left:180px"></div>
<div class="sep" style="left:220px"></div>
<div class="sep" style="left:260px"></div>
<div class="sep" style="left:307px"></div>
<div class="sep" style="left:351px"></div>
<div class="sep" style="left:395px"></div>
<div class="sep" style="left:439px"></div>
<div class="sep" style="left:483px"></div>
<div class="sep" style="left:527px"></div>
<div class="sep" style="left:571px"></div>
<div class="sep" style="left:610px"></div>
<div class="sep" style="left:649px"></div>
<div class="sep" style="left:688px"></div>
<span class="t f" style="left:111.6px;font-size:12.8px;transform:scaleX(1.0028);">A6</span>
<span class="t f" style="left:151.5px;font-size:12.8px;transform:scaleX(1.0539);">A7</span>
<span class="t f" style="left:191.5px;font-size:12.8px;transform:scaleX(1.0539);">A8</span>
<span class="t f" style="left:231.5px;font-size:12.8px;transform:scaleX(1.0220);">A9</span>
<span class="t f" style="left:271.5px;font-size:12.8px;transform:scaleX(1.0316);">A10</span>
<span class="t f" style="left:319.0px;font-size:12.8px;transform:scaleX(0.9286);">P-1</span>
<span class="t f" style="left:362.75px;font-size:12.8px;transform:scaleX(0.9914);">P-2</span>
<span class="t f" style="left:406.5px;font-size:12.8px;transform:scaleX(0.9788);">P-3</span>
<span class="t f" style="left:450.75px;font-size:12.8px;transform:scaleX(0.9663);">P-4</span>
<span class="t f" style="left:495.0px;font-size:12.8px;transform:scaleX(0.9663);">P-5</span>
<span class="t f" style="left:539.0px;font-size:12.8px;transform:scaleX(0.9788);">P-6</span>
<span class="t f" style="left:583.25px;font-size:12.8px;transform:scaleX(0.8623);">P7</span>
<span class="t f" style="left:622.0px;font-size:12.8px;transform:scaleX(0.8942);">P8</span>
<span class="t f" style="left:660.75px;font-size:12.8px;transform:scaleX(0.9102);">P9</span>
<span class="t f" style="left:700.75px;font-size:12.8px;transform:scaleX(1.0789);">bladvoorbeeld</span>
<div style="left:801px;top:810px;width:58px;height:25px;background:#fff;border-bottom:2px solid #217346;border-left:1px solid #ababab;border-right:1px solid #ababab"></div>
<span class="t f" style="left:813.2px;font-size:12.8px;font-weight:bold;transform:scaleX(0.9495);color:#217346">Blad1</span>
<svg style="left:892px;top:816px" width="16" height="16" viewBox="0 0 16 16" fill="none" stroke="#767676" stroke-width="1.100"><circle cx="8" cy="8" r="7.300"/><path d="M8 4.500v7M4.500 8h7" stroke-width="1.500"/></svg>
<svg style="left:1149px;top:819px" width="2" height="10" viewBox="0 0 2 10" fill="#a0a0a0"><rect width="2" height="2"/><rect y="4" width="2" height="2"/><rect y="8" width="2" height="2"/></svg>
<div class="box" style="left:1166px;top:817px;width:15px;height:15px;border-color:#ababab"><svg style="left:4px;top:3px" width="4" height="7" viewBox="0 0 4 7"><path d="M4 0v7L0 3.500z" fill="#111"/></svg></div>
<div style="left:1181px;top:817px;width:383px;height:15px;background:#f3f3f3"></div>
<div class="box" style="left:1181px;top:817px;width:366px;height:15px;border-color:#ababab"></div>
<div class="box" style="left:1564px;top:817px;width:15px;height:15px;border-color:#ababab"><svg style="left:5px;top:3px" width="4" height="7" viewBox="0 0 4 7"><path d="M0 0v7l4-3.500z" fill="#111"/></svg></div>
<div style="left:0;top:838px;width:1600px;height:1px;background:#c6c6c6"></div>
</div>
<div id="status">
<span class="t" style="left:7px">Gereed</span>
<svg style="left:64px;top:3px" width="15" height="15" viewBox="0 0 15 15" fill="none" stroke="#444" stroke-width="1.100"><circle cx="6.500" cy="2.300" r="1.700"/><path d="M1 4.500c1.500 1.200 3.500 1.500 3.800 1.800v3l-2.300 4.500c.5 1 1.500 1 2 0l2-3.700M12 4.500c-1.500 1.200-3.500 1.500-3.800 1.800v3l.8 1.500M1 4.500c.3-1 1.300-1 2-.5 2 1.200 5 1.200 7 0 .7-.5 1.700-.5 2 .5"/><path d="M8.800 9.300l5 5M13.800 9.300l-5 5" stroke-width="1.200"/></svg>
<span class="t f" style="left:81.5px;font-size:11.2px;transform:scaleX(1.0643);">Toegankelijkheid: onderzoeken</span>
<div style="left:1300px;top:0;width:40px;height:22px;background:#d2d2d2"></div>
<svg style="left:1313px;top:3px" width="13" height="13" viewBox="0 0 13 13" fill="none" stroke="#444" stroke-width="1"><rect x=".5" y=".5" width="12" height="12"/><path d="M.5 4.500h12M.5 8.500h12M4.500.500v12M8.500.500v12"/></svg>
<svg style="left:1353px;top:3px" width="14" height="13" viewBox="0 0 14 13" fill="none" stroke="#444" stroke-width="1"><rect x=".5" y=".5" width="13" height="12"/><rect x="3.500" y="2.500" width="7" height="8"/><path d="M5 4.500h4M5 6.500h4M5 8.500h4"/></svg>
<svg style="left:1393px;top:3px" width="14" height="13" viewBox="0 0 14 13" fill="none" stroke="#444" stroke-width="1"><rect x=".5" y=".5" width="13" height="12"/><path d="M.5 7.500h8v-7M4.500.500v7"/></svg>
<div style="left:1426px;top:10px;width:8px;height:1px;background:#444"></div>
<div style="left:1439px;top:10px;width:100px;height:1px;background:#444"></div>
<div style="left:1487px;top:5px;width:5px;height:11px;background:#444"></div>
<div style="left:1544px;top:10px;width:8px;height:1px;background:#444"></div><div style="left:1547px;top:6px;width:1px;height:9px;background:#444"></div>
<span class="t f" style="left:1564.8px;font-size:11.2px;transform:scaleX(0.9607);">100%</span>
</div>
<div id="taskbar">
<div style="left:147px;top:0;width:48px;height:40px;background:#333"></div>
<div style="left:147px;top:38px;width:48px;height:2px;background:#76b9ed"></div>
<div style="left:200px;top:38px;width:40px;height:2px;background:#76b9ed"></div>
<!-- windows -->
<svg style="left:16px;top:12px" width="16" height="16" viewBox="0 0 16 16" fill="#fff"><path d="M0 2.300L6.500 1.400v6.100H0zM7.300 1.300L16 0v7.500H7.300zM0 8.300h6.500v6.100L0 13.500zM7.300 8.300H16V16l-8.700-1.300z"/></svg>
<!-- search -->
<svg style="left:60px;top:9px" width="24" height="24" viewBox="0 0 24 24" fill="none" stroke="#fff" stroke-width="2.300"><circle cx="14" cy="9.500" r="7.300"/><path d="M8.800 14.700L1.500 22" stroke-linecap="round"/></svg>
<!-- task view -->
<svg style="left:112px;top:12px" width="17" height="16" viewBox="0 0 17 16" fill="none" stroke="#fff" stroke-width="1.300"><rect x="1.600" y="3.600" width="9.800" height="8.800"/><path d="M0 .7h12.500M0 15.300h12.500M14.800 0v3M14.800 6.500v9.500"/><rect x="13.300" y="3.600" width="3" height="2.500" fill="#fff" stroke="none"/></svg>
<!-- excel -->
<svg style="left:159px;top:9px" width="25" height="22" viewBox="0 0 25 22"><rect x="7" y="0" width="18" height="21" rx="1.500" fill="#21a366"/><rect x="16" y="0" width="9" height="5.300" fill="#33c481"/><rect x="7" y="5.300" width="9" height="5.300" fill="#107c41"/><rect x="16" y="5.300" width="9" height="5.300" fill="#21a366"/><rect x="7" y="10.600" width="9" height="5.300" fill="#185c37"/><rect x="16" y="10.600" width="9" height="5.300" fill="#107c41"/><rect x="7" y="15.800" width="18" height="5.200" rx="1" fill="#185c37"/><rect x="0" y="4.500" width="13" height="13" rx="1.300" fill="#107c41"/><text x="6.500" y="15" font-family="Liberation Sans,sans-serif" font-size="10.500" font-weight="bold" fill="#fff" text-anchor="middle">X</text></svg>
<!-- edge -->
<svg style="left:208px;top:8px" width="24" height="24" viewBox="0 0 24 24"><defs><linearGradient id="eg1" x1="0" y1="0" x2="1" y2="1"><stop offset="0" stop-color="#35c1f1"/><stop offset=".5" stop-color="#1b9de2"/><stop offset="1" stop-color="#0c59a4"/></linearGradient><linearGradient id="eg2" x1="0" y1="0" x2="1" y2="0"><stop offset="0" stop-color="#2fbfe0"/><stop offset="1" stop-color="#8be05a"/></linearGradient></defs><circle cx="12" cy="12" r="12" fill="url(#eg1)"/><path d="M1 9C3 2.500 9 0 13.500.200 20 .5 24 5.500 24 10.500c0 3.500-2.500 5.500-5.500 5.500-2.500 0-4-1-4-2 0-.8 1.300-1.200 1.300-3.200C15.800 8 13.500 6 10.300 6 6.500 6 2.500 7.500 1 9z" fill="url(#eg2)"/><path d="M9 10.200c-2.500 2.300-2.500 7.300.5 10.300 2.500 2.500 6.500 3.300 9.500 2-3.500 2.300-8.500 2-12-.8C2.500 18.500 1 13.500 3 9.500 5 6.500 9 5.800 12 7c-1.500.5-2.300 2-3 3.200z" fill="#0c4f96"/><path d="M9.500 11c.3-1.500 1.800-2.800 3.500-2.600 1.800.2 2.800 1.500 2.800 2.900 0 1.700-1.300 2.100-1.300 3 0 .8 1.500 1.700 3.500 1.700 1.500 0 3.300-.8 4.500-2.500C21 18 17.500 20.500 14 19.500c-3.500-1-5.300-4.800-4.500-8.500z" fill="#111" opacity=".85"/></svg>
<!-- spotify -->
<svg style="left:257px;top:8px" width="24" height="24" viewBox="0 0 24 24"><circle cx="12" cy="12" r="12" fill="#1ed760"/><g fill="none" stroke="#111" stroke-linecap="round"><path d="M5.200 8.300c4.500-1.400 9.800-1 13.800 1.200" stroke-width="2.400"/><path d="M5.800 12.200c4-1.100 8.200-.7 11.600 1.200" stroke-width="2"/><path d="M6.500 15.800c3.300-.8 6.500-.5 9.300 1" stroke-width="1.700"/></g></svg>
<!-- onenote -->
<svg style="left:306px;top:8px" width="24" height="23" viewBox="0 0 24 23"><rect x="6.500" y="0" width="17.500" height="23" rx="1.500" fill="#ca64ea"/><rect x="18" y="5.800" width="6" height="5.700" fill="#ae4bd5"/><rect x="18" y="11.500" width="6" height="5.700" fill="#9332bf"/><rect x="18" y="17.200" width="6" height="5.800" fill="#7719aa"/><rect x="0" y="5" width="13.500" height="13.500" rx="1.300" fill="#7719aa"/><text x="6.800" y="15.700" font-family="Liberation Sans,sans-serif" font-size="10.500" font-weight="bold" fill="#fff" text-anchor="middle">N</text></svg>
<!-- photos -->
<svg style="left:356px;top:9px" width="22" height="22" viewBox="0 0 22 22"><defs><linearGradient id="pg" x1="0" y1="0" x2="1" y2="1"><stop offset="0" stop-color="#2bb7f0"/><stop offset="1" stop-color="#4a8df0"/></linearGradient></defs><rect width="22" height="22" rx="1.500" fill="url(#pg)"/><path d="M0 22V15l7.500-7.500L22 22z" fill="#1b4f9c"/><path d="M10 10l4-3.500 8 8V22z" fill="#3f6fd0"/><circle cx="15" cy="5" r="1.700" fill="#fff"/></svg>
<!-- word -->
<svg style="left:404px;top:9px" width="25" height="22" viewBox="0 0 25 22"><rect x="7" y="0" width="18" height="21.500" rx="1.500" fill="#2b7cd3"/><rect x="7" y="0" width="18" height="5.400" fill="#41a5ee"/><rect x="7" y="5.400" width="18" height="5.400" fill="#2b7cd3"/><rect x="7" y="10.800" width="18" height="5.400" fill="#185abd"/><rect x="7" y="16.200" width="18" height="5.300" rx="1" fill="#103f91"/><rect x="0" y="4.500" width="13" height="13" rx="1.300" fill="#185abd"/><text x="6.500" y="15" font-family="Liberation Sans,sans-serif" font-size="10" font-weight="bold" fill="#fff" text-anchor="middle">W</text></svg>
<!-- calendar -->
<svg style="left:453px;top:8px" width="24" height="24" viewBox="0 0 24 24"><rect x="0" y="0" width="24" height="24" rx="2.500" fill="#4285f4"/><rect x="19" y="4" width="5" height="15" fill="#fbbc04"/><rect x="4" y="19" width="15" height="5" fill="#34a853"/><path d="M0 19h4v5H2.500A2.500 2.500 0 0 1 0 21.500z" fill="#188038"/><path d="M19 19h5l-5 5z" fill="#ea4335"/><path d="M19 0h2.500A2.500 2.500 0 0 1 24 2.500V4h-5z" fill="#1967d2"/><rect x="4" y="4" width="15" height="15" fill="#fff"/><text x="11.500" y="16" font-family="Liberation Sans,sans-serif" font-size="11" font-weight="bold" fill="#1a73e8" text-anchor="middle" letter-spacing="-.5">31</text></svg>
<!-- whatsapp -->
<svg style="left:502px;top:8px" width="24" height="24" viewBox="0 0 24 24"><path d="M0 24l1.700-6.200A12 12 0 1 1 6.300 22.400z" fill="#fff"/><path d="M2.300 21.700l1.200-4.300A10 10 0 1 1 7 20.600z" fill="#40c351"/><path d="M8.500 6.500c-.4-.8-.7-.8-1.200-.8-1 0-2 1.200-2 2.800 0 1.700 1.200 3.300 1.400 3.500.2.200 2.400 3.800 6 5.200 2.900 1.100 3.500.9 4.100.8.600-.1 2-.8 2.300-1.600.3-.8.300-1.500.2-1.600-.1-.2-.3-.2-.7-.4l-2.300-1.100c-.3-.1-.5-.2-.8.200l-1 1.300c-.2.200-.4.300-.7.100-1.600-.7-3.200-2-4.100-3.800-.1-.3 0-.5.200-.7l.9-1.100c.2-.3.100-.5 0-.8z" fill="#fff"/></svg>
<!-- scan -->
<svg style="left:551px;top:8px" width="24" height="24" viewBox="0 0 24 24"><rect width="24" height="24" fill="#2672ec"/><path d="M8.500 5.200L19.300 15" stroke="#fff" stroke-width="1.400"/><path d="M6 13.800h8.300" stroke="#fff" stroke-width=".9"/><rect x="4.500" y="15.600" width="15.200" height="3.700" fill="#fff"/></svg>
<!-- outlook -->
<svg style="left:600px;top:9px" width="25" height="22" viewBox="0 0 25 22"><rect x="8" y="0" width="15" height="14" rx="1" fill="#0364b8"/><rect x="8" y="0" width="5" height="4.700" fill="#0364b8"/><rect x="13" y="0" width="5" height="4.700" fill="#0078d4"/><rect x="18" y="0" width="5" height="4.700" fill="#28a8ea"/><rect x="13" y="4.700" width="5" height="4.700" fill="#28a8ea"/><rect x="18" y="4.700" width="5" height="4.700" fill="#50d9ff"/><rect x="13" y="9.400" width="5" height="4.600" fill="#0078d4"/><rect x="18" y="9.400" width="5" height="4.600" fill="#28a8ea"/><path d="M6.500 11.500L25 9.500v11a1.500 1.500 0 0 1-1.500 1.500H8a1.500 1.500 0 0 1-1.500-1.500z" fill="#1490df"/><path d="M25 9.500L9 21.800h14.500A1.500 1.500 0 0 0 25 20.500z" fill="#28a8ea"/><rect x="0" y="4.500" width="13" height="13" rx="1.300" fill="#0f6cbd"/><circle cx="6.500" cy="11" r="3.200" fill="none" stroke="#fff" stroke-width="1.800"/></svg>
<!-- clipchamp -->
<svg style="left:649px;top:8px" width="24" height="24" viewBox="0 0 24 24"><defs><linearGradient id="cg" x1="0" y1="0" x2="0" y2="1"><stop offset="0" stop-color="#f2a6f5"/><stop offset=".5" stop-color="#a95cf0"/><stop offset="1" stop-color="#5a3df0"/></linearGradient></defs><path d="M.5 5.500L21 0.500a1.500 1.500 0 0 1 1.800 1.100l.5 2.100L1.500 9z" fill="#a348d6"/><rect x="0.500" y="9" width="23" height="15" rx="2" fill="url(#cg)"/><rect x="0.500" y="9" width="23" height="4.500" fill="#f0aaf7" opacity=".8"/><rect x="8" y="13.500" width="15.500" height="4" fill="#8a4df0" opacity=".6"/></svg>
<!-- chrome -->
<svg style="left:698px;top:8px" width="24" height="24" viewBox="0 0 24 24"><circle cx="12" cy="12" r="12" fill="#fbc116"/><path d="M12 12L1.600 6A12 12 0 0 1 22.400 6z" fill="#e33b2e"/><path d="M12 12L1.600 6A12 12 0 0 0 12 24l5.200-9z" fill="#1ea362"/><path d="M1.600 6A12 12 0 0 1 22.400 6H12z" fill="#e33b2e"/><circle cx="12" cy="12" r="5.500" fill="#fff"/><circle cx="12" cy="12" r="4.400" fill="#4285f4"/></svg>
<!-- folder -->
<svg style="left:747px;top:11px" width="23" height="18" viewBox="0 0 23 18"><path d="M0 1.500A1.500 1.500 0 0 1 1.500 0h6.800l2 2H0z" fill="#e8a317"/><rect x="0" y="1.500" width="23" height="16.500" rx="1" fill="#f8d775"/><rect x="0" y="1.500" width="23" height="3" fill="#f3c44a"/><path d="M5 18v-6.500h13V18h-3v-4h-7v4z" fill="#3a96dd"/></svg>
<!-- calculator -->
<svg style="left:799px;top:8px" width="18" height="24" viewBox="0 0 18 24"><rect width="18" height="24" rx="1.500" fill="#767a80"/><rect x="2" y="2" width="14" height="4.500" fill="#4dd0f7"/><g fill="#dcdfe3"><rect x="2" y="8.500" width="3.800" height="3.800"/><rect x="7.100" y="8.500" width="3.800" height="3.800"/><rect x="2" y="13.500" width="3.800" height="3.800"/><rect x="7.100" y="13.500" width="3.800" height="3.800"/><rect x="2" y="18.500" width="3.800" height="3.800"/><rect x="7.100" y="18.500" width="3.800" height="3.800"/><rect x="12.200" y="8.500" width="3.800" height="3.800"/></g><rect x="12.200" y="13.500" width="3.800" height="8.800" fill="#0e3c7c"/></svg>
<!-- bing -->
<svg style="left:852px;top:11px" width="12" height="17" viewBox="0 0 12 17"><defs><linearGradient id="bg" x1="0" y1="0" x2="1" y2="1"><stop offset="0" stop-color="#37bdff"/><stop offset="1" stop-color="#1468d8"/></linearGradient></defs><path d="M0 0l3.500 1.200v10.300l4-2.300-2.200-1-1.200-3L12 7.800v3.800L3.500 17 0 15z" fill="url(#bg)"/></svg>
<span class="t f" style="left:1105.3px;top:10.5px;font-size:11.8px;line-height:14px;transform:scaleX(1.0203);">NL</span>
<svg style="left:1139.500px;top:10px" width="22" height="22" viewBox="0 0 22 22"><circle cx="11" cy="11" r="10.800" fill="#fff"/><circle cx="11" cy="11" r="9" fill="#0f8fd6"/><path d="M7.400 8.400a3.600 3.600 0 1 1 5.700 2.900c-1.400 1-2.100 1.700-2.100 3.200" stroke="#fff" stroke-width="2" fill="none" stroke-linecap="round"/><circle cx="11" cy="17.400" r="1.400" fill="#fff"/></svg>
<svg style="left:1242px;top:8px" width="24" height="24" viewBox="0 0 24 24"><defs><linearGradient id="sg" x1="0.150" y1="0.100" x2=".85" y2=".9"><stop offset="0" stop-color="#f7b722"/><stop offset="1" stop-color="#e85d0c"/></linearGradient></defs><circle cx="11" cy="12.300" r="10.300" fill="url(#sg)"/><circle cx="20" cy="2.800" r="2.800" fill="#d93025"/></svg>
<span class="t f" style="left:1272.5px;top:10px;font-size:13.2px;line-height:20px;transform:scaleX(1.0180);">26°C</span>
<span class="t f" style="left:1310.5px;top:10px;font-size:13.2px;line-height:20px;transform:scaleX(1.1084);">Zonnig</span>
<svg style="left:1379px;top:16px" width="13" height="8" viewBox="0 0 13 8" fill="none" stroke="#fff" stroke-width="1.300"><path d="M.5 7.300l6-6 6 6"/></svg>
<svg style="left:1403px;top:11px" width="13" height="17" viewBox="0 0 13 17" fill="none" stroke="#fff" stroke-width="1.100"><rect x=".6" y="5" width="7.500" height="7" rx="1.500"/><path d="M8.100 8l3.500-2v5l-3.500-2"/><path d="M2 2.300Q5.700-.5 9.500 2.300M2 14.700Q5.700 17.500 9.500 14.700"/></svg>
<svg style="left:1425px;top:13px" width="17" height="12" viewBox="0 0 17 12" fill="none" stroke="#fff" stroke-width="1"><rect x="6" y="3.500" width="9" height="7"/><rect x="7.300" y="4.800" width="3.200" height="4.400" fill="#fff" stroke="none"/><rect x="15.300" y="5.500" width="1.200" height="3" fill="#fff" stroke="none"/><path d="M1.300 .5v2.500M3.500 .5v2.500" stroke-width=".9"/><path d="M.3 3h4.200v1.800l-1 1.200H1.300l-1-1.200z" fill="#fff" stroke="none"/><path d="M2.400 6v2.500q0 1.300 1.300 1.300h2" stroke-width=".9"/></svg>
<svg style="left:1448px;top:13px" width="18" height="15" viewBox="0 0 18 15"><path d="M4.500 10.500a3.200 3.200 0 0 1 .3-6.400A4.500 4.500 0 0 1 13 3.500a3.500 3.500 0 0 1 1 7z" fill="#9c9c9c"/><path d="M2.500 11.200a2.800 2.800 0 0 1 .8-5.400 3.600 3.600 0 0 1 6.700 1A2.400 2.400 0 0 1 10.500 11.200z" fill="#dcdcdc"/><circle cx="12.500" cy="10.500" r="4.400" fill="#e81123"/><path d="M10.700 8.700l3.600 3.600M14.300 8.700l-3.600 3.600" stroke="#fff" stroke-width="1.300"/></svg>
<svg style="left:1472px;top:12px" width="18" height="16" viewBox="0 0 18 16" fill="none" stroke="#fff" stroke-width="1.100"><path d="M.6 5.500h3l4-4v13l-4-4h-3z"/><path d="M9.800 5.500q1.500 2.500 0 5M12 3.500q2.800 4.500 0 9M14.200 1.500q4 6.500 0 13"/></svg>
<span class="t f" style="left:1506.5px;top:4px;font-size:10.9px;line-height:14px;transform:scaleX(0.9829);">12:40</span>
<span class="t f" style="left:1499.7px;top:22px;font-size:10.9px;line-height:14px;transform:scaleX(0.9905);">11.07.23</span>
<svg style="left:1559px;top:12px" width="17" height="16" viewBox="0 0 17 16"><path d="M0 0h16v12H8.500l-3 3.500V12H0z" fill="#fff"/><path d="M3 3.500h10M3 6h10M3 8.500h7" stroke="#111" stroke-width="1.100"/><circle cx="13.500" cy="12" r="3" fill="#111"/><path d="M12 13.500a2 2 0 0 1 3-3" fill="none" stroke="#fff" stroke-width="1"/></svg>
<div style="left:1596px;top:0;width:1px;height:40px;background:#6a6a6a"></div>
</div>

</div>
</body></html>
